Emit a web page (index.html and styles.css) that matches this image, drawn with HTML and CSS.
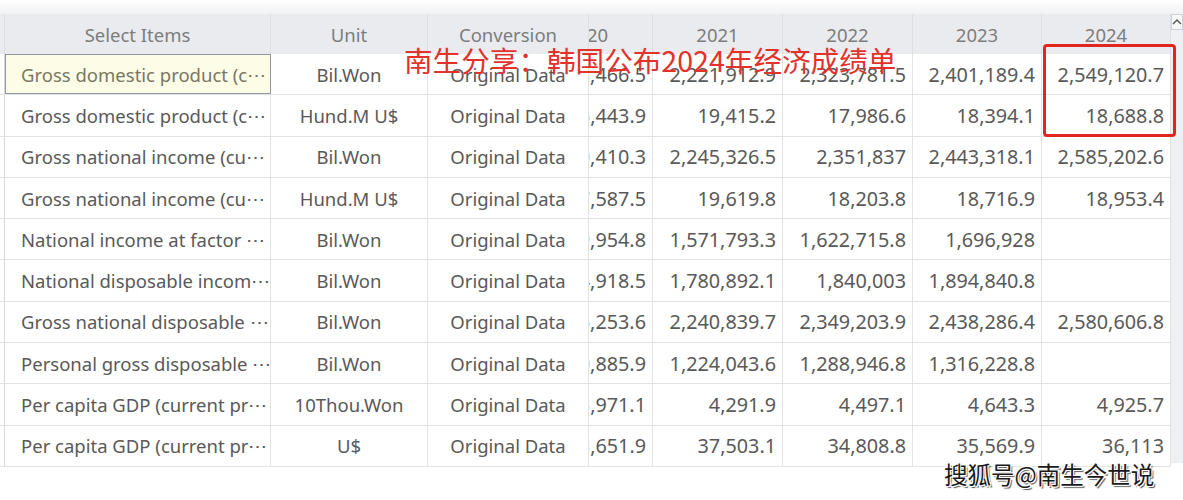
FILE: index.html
```html
<!DOCTYPE html>
<html lang="en">
<head>
<meta charset="utf-8">
<title>Korea GDP</title>
<link rel="stylesheet" href="styles.css">
</head>
<body>
<div class="page">
  <div class="topband"></div>
  <div class="frame">
    <div class="grid">
      <div class="row head">
        <div class="c stub"></div>
        <div class="c name hc">Select Items</div>
        <div class="c ctr">Unit</div>
        <div class="c ctr">Conversion</div>
        <div class="c clip"><span class="inner ctr">2020</span></div>
        <div class="c ctr">2021</div>
        <div class="c ctr">2022</div>
        <div class="c ctr">2023</div>
        <div class="c ctr">2024</div>
      </div>
      <div class="row">
        <div class="c stub"></div>
        <div class="c name sel">Gross domestic product (c⋯</div>
        <div class="c ctr">Bil.Won</div>
        <div class="c ctr">Original Data</div>
        <div class="c clip"><span class="inner num">2,058,466.5</span></div>
        <div class="c num">2,221,912.9</div>
        <div class="c num">2,323,781.5</div>
        <div class="c num">2,401,189.4</div>
        <div class="c num">2,549,120.7</div>
      </div>
      <div class="row">
        <div class="c stub"></div>
        <div class="c name">Gross domestic product (c⋯</div>
        <div class="c ctr">Hund.M U$</div>
        <div class="c ctr">Original Data</div>
        <div class="c clip"><span class="inner num">16,443.9</span></div>
        <div class="c num">19,415.2</div>
        <div class="c num">17,986.6</div>
        <div class="c num">18,394.1</div>
        <div class="c num">18,688.8</div>
      </div>
      <div class="row">
        <div class="c stub"></div>
        <div class="c name">Gross national income (cu⋯</div>
        <div class="c ctr">Bil.Won</div>
        <div class="c ctr">Original Data</div>
        <div class="c clip"><span class="inner num">2,080,410.3</span></div>
        <div class="c num">2,245,326.5</div>
        <div class="c num">2,351,837</div>
        <div class="c num">2,443,318.1</div>
        <div class="c num">2,585,202.6</div>
      </div>
      <div class="row">
        <div class="c stub"></div>
        <div class="c name">Gross national income (cu⋯</div>
        <div class="c ctr">Hund.M U$</div>
        <div class="c ctr">Original Data</div>
        <div class="c clip"><span class="inner num">17,587.5</span></div>
        <div class="c num">19,619.8</div>
        <div class="c num">18,203.8</div>
        <div class="c num">18,716.9</div>
        <div class="c num">18,953.4</div>
      </div>
      <div class="row">
        <div class="c stub"></div>
        <div class="c name">National income at factor ⋯</div>
        <div class="c ctr">Bil.Won</div>
        <div class="c ctr">Original Data</div>
        <div class="c clip"><span class="inner num">1,459,954.8</span></div>
        <div class="c num">1,571,793.3</div>
        <div class="c num">1,622,715.8</div>
        <div class="c num">1,696,928</div>
        <div class="c num"></div>
      </div>
      <div class="row">
        <div class="c stub"></div>
        <div class="c name">National disposable incom⋯</div>
        <div class="c ctr">Bil.Won</div>
        <div class="c ctr">Original Data</div>
        <div class="c clip"><span class="inner num">1,654,918.5</span></div>
        <div class="c num">1,780,892.1</div>
        <div class="c num">1,840,003</div>
        <div class="c num">1,894,840.8</div>
        <div class="c num"></div>
      </div>
      <div class="row">
        <div class="c stub"></div>
        <div class="c name">Gross national disposable ⋯</div>
        <div class="c ctr">Bil.Won</div>
        <div class="c ctr">Original Data</div>
        <div class="c clip"><span class="inner num">2,076,253.6</span></div>
        <div class="c num">2,240,839.7</div>
        <div class="c num">2,349,203.9</div>
        <div class="c num">2,438,286.4</div>
        <div class="c num">2,580,606.8</div>
      </div>
      <div class="row">
        <div class="c stub"></div>
        <div class="c name">Personal gross disposable ⋯</div>
        <div class="c ctr">Bil.Won</div>
        <div class="c ctr">Original Data</div>
        <div class="c clip"><span class="inner num">1,160,885.9</span></div>
        <div class="c num">1,224,043.6</div>
        <div class="c num">1,288,946.8</div>
        <div class="c num">1,316,228.8</div>
        <div class="c num"></div>
      </div>
      <div class="row">
        <div class="c stub"></div>
        <div class="c name">Per capita GDP (current pr⋯</div>
        <div class="c ctr">10Thou.Won</div>
        <div class="c ctr">Original Data</div>
        <div class="c clip"><span class="inner num">3,971.1</span></div>
        <div class="c num">4,291.9</div>
        <div class="c num">4,497.1</div>
        <div class="c num">4,643.3</div>
        <div class="c num">4,925.7</div>
      </div>
      <div class="row">
        <div class="c stub"></div>
        <div class="c name">Per capita GDP (current pr⋯</div>
        <div class="c ctr">U$</div>
        <div class="c ctr">Original Data</div>
        <div class="c clip"><span class="inner num">33,651.9</span></div>
        <div class="c num">37,503.1</div>
        <div class="c num">34,808.8</div>
        <div class="c num">35,569.9</div>
        <div class="c num">36,113</div>
      </div>
    </div>
    <div class="scrollbar">
      <div class="sb-btn"><svg width="10" height="8" viewBox="0 0 10 8"><path d="M1 6 L5 2 L9 6" fill="none" stroke="#555" stroke-width="1.4"/></svg></div>
      <div class="sb-track"></div>
    </div>
  </div>
  <div class="headline">南生分享：韩国公布2024年经济成绩单</div>
  <div class="redbox"></div>
  <div class="watermark">搜狐号@南生今世说</div>
</div>
</body>
</html>
```

FILE: styles.css
```css
html, body {
  margin: 0;
  padding: 0;
  background: #ffffff;
}
.page {
  position: relative;
  width: 1183px;
  height: 500px;
  overflow: hidden;
  font-family: "Noto Sans", "Open Sans", sans-serif;
  color: #595959;
}
.topband {
  height: 14px;
  background: linear-gradient(#ffffff, #f1f2f4);
}
.frame {
  display: flex;
  align-items: flex-start;
}
.grid {
  display: flex;
  flex-direction: column;
  width: 1171px;
}
.row {
  display: grid;
  grid-template-columns: 5px 266px 157px 161px 64px 130px 130px 129px 129px;
  height: 41.3px;
  border-bottom: 1px solid #e3e3e3;
  box-sizing: border-box;
}
.row.head {
  height: 40px;
  background: #e9ebef;
  color: #7d7d7d;
  border-bottom: none;
}
.c {
  display: flex;
  align-items: center;
  font-size: 18.5px;
  white-space: nowrap;
  overflow: hidden;
  border-right: 1px solid #e3e3e3;
  box-sizing: border-box;
  min-width: 0;
}
.head .c {
  border-right: 1px solid #dcdfe4;
}
.stub {
  border-right: 1px solid #d9d9d9;
}
.name {
  padding-left: 16px;
}
.name.hc {
  justify-content: center;
  padding-left: 0;
}
.ctr {
  justify-content: center;
}
.num {
  justify-content: flex-end;
  padding-right: 6px;
  font-size: 19.8px;
}
.clip {
  justify-content: flex-end;
}
.inner {
  flex: 0 0 130px;
  width: 130px;
  display: flex;
  box-sizing: border-box;
}
.sel {
  background: #fdfde7;
  outline: 1px solid #8e99a4;
  outline-offset: -1px;
  color: #7a7664;
}
.scrollbar {
  width: 12px;
  height: 449px;
  display: flex;
  flex-direction: column;
  background: #eef0f3;
}
.sb-btn {
  height: 16px;
  display: flex;
  align-items: center;
  justify-content: center;
  background: #f7f7f7;
  border: 1px solid #cfd2d6;
  box-sizing: border-box;
}
.sb-track {
  flex: 1;
}
.headline {
  position: absolute;
  left: 404px;
  top: 40px;
  font-family: "Noto Sans CJK SC", sans-serif;
  font-size: 28.6px;
  line-height: 40px;
  color: #e2322b;
}
.redbox {
  position: absolute;
  left: 1043px;
  top: 44px;
  width: 133px;
  height: 93px;
  border: 3px solid #e1261f;
  border-radius: 4px;
  box-sizing: border-box;
}
.watermark {
  position: absolute;
  left: 944px;
  top: 457px;
  font-family: "Noto Sans CJK SC", sans-serif;
  font-size: 23.5px;
  line-height: 34px;
  color: #1a1a1a;
  text-shadow: 1px 1px 0 #ffffff, -1px -1px 0 #ffffff, 1px -1px 0 #ffffff, -1px 1px 0 #ffffff, 2px 2px 1px #555555;
}
```
